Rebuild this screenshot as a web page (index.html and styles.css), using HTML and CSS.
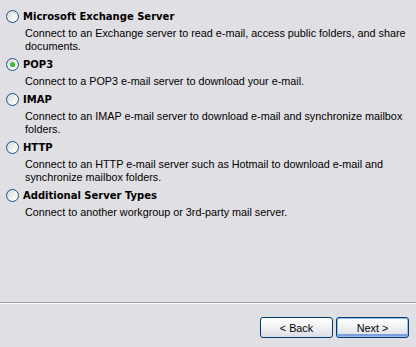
FILE: index.html
```html
<!DOCTYPE html>
<html lang="en">
<head>
    <meta charset="UTF-8">
    <title>Choose E-mail Server Type</title>
    <link rel="stylesheet" href="styles.css">
</head>
<body>
    <div class="wizard">
        <div class="options">
            <div class="option">
                <label class="option-title"><span class="radio"></span>Microsoft Exchange Server</label>
                <p class="option-desc">Connect to an Exchange server to read e-mail, access public folders, and share<br>documents.</p>
            </div>
            <div class="option">
                <label class="option-title"><span class="radio checked"></span>POP3</label>
                <p class="option-desc">Connect to a POP3 e-mail server to download your e-mail.</p>
            </div>
            <div class="option">
                <label class="option-title"><span class="radio"></span>IMAP</label>
                <p class="option-desc">Connect to an IMAP e-mail server to download e-mail and synchronize mailbox<br>folders.</p>
            </div>
            <div class="option">
                <label class="option-title"><span class="radio"></span>HTTP</label>
                <p class="option-desc">Connect to an HTTP e-mail server such as Hotmail to download e-mail and<br>synchronize mailbox folders.</p>
            </div>
            <div class="option">
                <label class="option-title"><span class="radio"></span>Additional Server Types</label>
                <p class="option-desc">Connect to another workgroup or 3rd-party mail server.</p>
            </div>
        </div>
        <div class="separator"></div>
        <div class="footer">
            <button class="btn">&lt; Back</button>
            <button class="btn default">Next &gt;</button>
        </div>
    </div>
</body>
</html>
```

FILE: styles.css
```css
* {
    margin: 0;
    padding: 0;
    box-sizing: border-box;
}

body {
    background: #e0dfe3;
    font-family: "Liberation Sans", Arial, sans-serif;
    font-size: 10.8px;
    color: #000;
}

.wizard {
    display: flex;
    flex-direction: column;
    height: 347px;
}

.options {
    flex: 1;
    padding: 8px 0 0 6px;
}

.option-title {
    display: flex;
    align-items: center;
    height: 16px;
    margin-bottom: 3px;
    font-family: "DejaVu Sans", Verdana, sans-serif;
    font-weight: bold;
    font-size: 10px;
}

.radio {
    width: 13px;
    height: 13px;
    margin-right: 4px;
    border: 1px solid #1c5180;
    border-radius: 50%;
    background: linear-gradient(135deg, #d4d4cf 0%, #f2f2ef 55%, #fff 100%);
    display: flex;
    align-items: center;
    justify-content: center;
}

.radio.checked::after {
    content: "";
    width: 5px;
    height: 5px;
    border-radius: 50%;
    background: radial-gradient(circle at 40% 40%, #55d355 0%, #21a121 70%, #1a8a1a 100%);
}

.option-desc {
    margin: 0 0 3px 19px;
    line-height: 13px;
}

.separator {
    height: 2px;
    border-top: 1px solid #a0a0a4;
    border-bottom: 1px solid #fff;
}

.footer {
    display: flex;
    justify-content: flex-end;
    gap: 3px;
    padding: 13px 7px 9px 0;
}

.btn {
    width: 73px;
    height: 21px;
    border: 1px solid #003c74;
    border-radius: 3px;
    background: linear-gradient(#ffffff 0%, #f4f4f6 40%, #dcdce6 100%);
    font-family: "Liberation Sans", Arial, sans-serif;
    font-size: 10.8px;
    color: #000;
}

.btn.default {
    box-shadow: inset 0 0 0 1px #9fbbec, inset 0 -2px 0 1px #7a9ee0;
}
```
